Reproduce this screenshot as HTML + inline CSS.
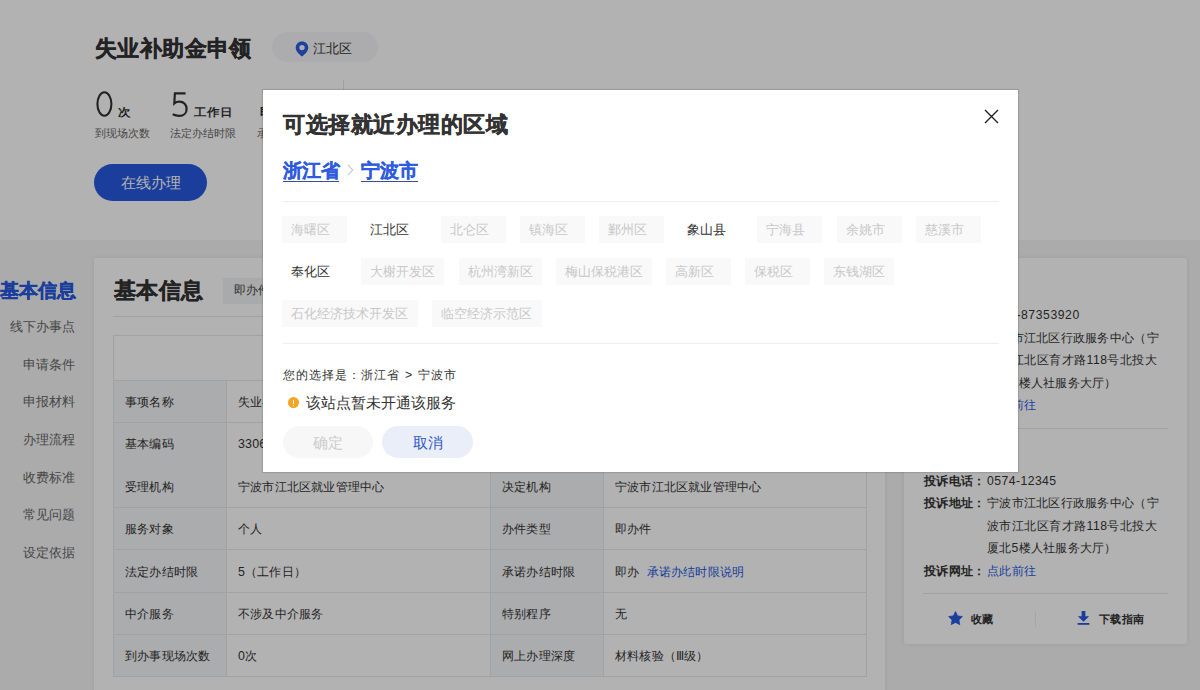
<!DOCTYPE html>
<html><head><meta charset="utf-8">
<style>
*{margin:0;padding:0;box-sizing:border-box}
html,body{width:1200px;height:690px;overflow:hidden}
body{font-family:"Liberation Sans",sans-serif;background:#f5f5f5;position:relative;color:#333}
.a{position:absolute;white-space:nowrap}
.top{position:absolute;left:0;top:0;width:1200px;height:240px;background:#fff}
.num{font-size:36px;line-height:38px;color:#333;transform:scaleX(.88);transform-origin:0 0}
.unit{font-size:12.5px;font-weight:bold;color:#333;line-height:14px;transform:scaleY(.88);transform-origin:0 100%}
.lab{font-size:11.25px;color:#666;line-height:14px}
.nav{right:1125px;font-size:13.1px;color:#666;line-height:16px;text-align:right}
.card{position:absolute;background:#fff;box-shadow:0 0 5px rgba(0,0,0,.08)}
.hl{position:absolute;background:#e8e8e8}
.cl{position:absolute;background:#f5f6f8}
.tt{position:absolute;letter-spacing:0.2px;font-size:12.4px;color:#333;line-height:16px;white-space:nowrap;margin-top:1px}
.overlay{position:absolute;left:0;top:0;width:1200px;height:690px;background:rgba(0,0,0,.3)}
.modal{position:absolute;left:263px;top:90px;width:755px;height:382px;background:#fff;box-shadow:0 0 1px 1px rgba(0,0,0,.12)}
.tag{position:absolute;height:27px;line-height:27px;font-size:13.1px;color:#c8c8c8;background:#f9f9f9;padding-left:9px;white-space:nowrap}
.tag.on{background:none;color:#333}
.rc{position:absolute;letter-spacing:0.27px;font-size:12.2px;line-height:16px;color:#333;white-space:nowrap}
.rb{font-weight:bold}
</style></head><body>
<div class="top"></div>
<div class="a" style="left:95px;top:35px;letter-spacing:0.4px;font-size:22px;font-weight:bold;color:#333;-webkit-text-stroke:0.4px #333;line-height:28px">失业补助金申领</div>
<div class="a" style="left:272px;top:32px;width:106px;height:30px;border-radius:15px;background:#f6f7f9"></div>
<svg class="a" style="left:295px;top:41px" width="14" height="16" viewBox="0 0 14 16"><path d="M7 0.6C3.5 0.6 0.7 3.3 0.7 6.7c0 3.4 3.6 6.7 6.3 8.8c2.7-2.1 6.3-5.4 6.3-8.8C13.3 3.3 10.5 0.6 7 0.6z M7 3.9a2.7 2.7 0 1 1 0 5.4a2.7 2.7 0 1 1 0-5.4z" fill="#2a5ce0" fill-rule="evenodd"/></svg>
<div class="a" style="left:313px;top:41px;font-size:13.1px;line-height:16px;color:#333">江北区</div>

<svg class="a" style="left:0;top:0" width="200" height="130"><ellipse cx="104.4" cy="104" rx="7" ry="11.7" fill="none" stroke="#333" stroke-width="2.1"/><path d="M185.6 93.3H174.9L174.3 103.4C175.6 102.3 177.4 101.7 179.4 101.7C183.9 101.7 186.6 105 186.6 108.9C186.6 113.2 183.6 115.9 179.3 115.9C176.8 115.9 174.5 115.3 172.7 114.3" fill="none" stroke="#333" stroke-width="2.2"/></svg>
<div class="a unit" style="left:118px;top:105px">次</div>
<div class="a lab" style="left:95px;top:126px">到现场次数</div>

<div class="a unit" style="left:194px;top:105px">工作日</div>
<div class="a lab" style="left:170px;top:126px">法定办结时限</div>
<div class="a unit" style="left:260px;top:105px">即办</div>
<div class="a lab" style="left:257px;top:126px">承诺办结时限</div>
<div class="a" style="left:343px;top:80px;width:1px;height:52px;background:#e5e5e5"></div>
<div class="a" style="left:94px;top:164px;width:113px;height:37px;border-radius:19px;background:#2759e0;color:#fff;font-size:15px;line-height:37px;text-align:center">在线办理</div>

<div class="a" style="left:0;top:280px;font-size:18.75px;font-weight:bold;color:#2759e0;-webkit-text-stroke:0.4px #2759e0;line-height:22px">基本信息</div>
<div class="a nav" style="top:319px">线下办事点</div>
<div class="a nav" style="top:356.7px">申请条件</div>
<div class="a nav" style="top:394.3px">申报材料</div>
<div class="a nav" style="top:432px">办理流程</div>
<div class="a nav" style="top:469.7px">收费标准</div>
<div class="a nav" style="top:507.3px">常见问题</div>
<div class="a nav" style="top:545px">设定依据</div>

<div class="card" style="left:94px;top:258px;width:791px;height:450px"></div>
<div class="a" style="left:114px;top:278px;letter-spacing:0.3px;font-size:22px;font-weight:bold;color:#333;-webkit-text-stroke:0.4px #333;line-height:26px">基本信息</div>
<div class="a" style="left:223px;top:278px;width:75px;height:25.5px;background:#f3f4f6;font-size:12.2px;line-height:25.5px;padding-left:10.5px;color:#444">即办件</div>
<div class="hl" style="left:113px;top:316px;width:753px;height:1px"></div>

<!-- table -->
<div class="cl" style="left:113px;top:380px;width:114px;height:296px"></div>
<div class="cl" style="left:490px;top:380px;width:114px;height:296px"></div>
<div class="hl" style="left:113px;top:335px;width:753px;height:1px"></div>
<div class="hl" style="left:113px;top:380px;width:753px;height:1px"></div>
<div class="hl" style="left:113px;top:422.3px;width:753px;height:1px"></div>
<div class="hl" style="left:113px;top:506.9px;width:753px;height:1px"></div>
<div class="hl" style="left:113px;top:549.2px;width:753px;height:1px"></div>
<div class="hl" style="left:113px;top:591.5px;width:753px;height:1px"></div>
<div class="hl" style="left:113px;top:633.8px;width:753px;height:1px"></div>
<div class="hl" style="left:113px;top:676px;width:753px;height:1px"></div>
<div class="hl" style="left:113px;top:335px;width:1px;height:342px"></div>
<div class="hl" style="left:866px;top:335px;width:1px;height:342px"></div>
<div class="hl" style="left:226px;top:380px;width:1px;height:297px"></div>
<div class="hl" style="left:490px;top:380px;width:1px;height:297px"></div>
<div class="hl" style="left:603px;top:380px;width:1px;height:297px"></div>

<div class="tt" style="left:125px;top:393px">事项名称</div>
<div class="tt" style="left:238px;top:393px">失业补助金申领</div>
<div class="tt" style="left:125px;top:435px">基本编码</div>
<div class="tt" style="left:238px;top:435px">33060200100</div>
<div class="tt" style="left:125px;top:478px">受理机构</div>
<div class="tt" style="left:238px;top:478px">宁波市江北区就业管理中心</div>
<div class="tt" style="left:502px;top:478px">决定机构</div>
<div class="tt" style="left:615px;top:478px">宁波市江北区就业管理中心</div>
<div class="tt" style="left:125px;top:520px">服务对象</div>
<div class="tt" style="left:238px;top:520px">个人</div>
<div class="tt" style="left:502px;top:520px">办件类型</div>
<div class="tt" style="left:615px;top:520px">即办件</div>
<div class="tt" style="left:125px;top:563px">法定办结时限</div>
<div class="tt" style="left:238px;top:563px">5（工作日）</div>
<div class="tt" style="left:502px;top:563px">承诺办结时限</div>
<div class="tt" style="left:615px;top:563px">即办 &nbsp;<span style="color:#2759e0">承诺办结时限说明</span></div>
<div class="tt" style="left:125px;top:605px">中介服务</div>
<div class="tt" style="left:238px;top:605px">不涉及中介服务</div>
<div class="tt" style="left:502px;top:605px">特别程序</div>
<div class="tt" style="left:615px;top:605px">无</div>
<div class="tt" style="left:125px;top:647px">到办事现场次数</div>
<div class="tt" style="left:238px;top:647px">0次</div>
<div class="tt" style="left:502px;top:647px">网上办理深度</div>
<div class="tt" style="left:615px;top:647px">材料核验（Ⅲ级）</div>

<!-- right card -->
<div class="card" style="left:904px;top:258px;width:283px;height:386px;border-radius:3px"></div>
<div class="rc" style="left:987px;top:307px;letter-spacing:0.57px">0574-87353920</div>
<div class="rc" style="left:987px;top:330px">宁波市江北区行政服务中心（宁</div>
<div class="rc" style="left:987px;top:352px;letter-spacing:0.45px">波市江北区育才路118号北投大</div>
<div class="rc" style="left:987px;top:375px">厦北5楼人社服务大厅）</div>
<div class="rc" style="left:987px;top:397px;color:#2759e0">点此前往</div>
<div class="hl" style="left:923px;top:428px;width:245px;height:1px"></div>
<div class="rc rb" style="left:924px;top:473px">投诉电话：</div>
<div class="rc" style="left:987px;top:473px;letter-spacing:0.45px">0574-12345</div>
<div class="rc rb" style="left:924px;top:495px">投诉地址：</div>
<div class="rc" style="left:987px;top:495px">宁波市江北区行政服务中心（宁</div>
<div class="rc" style="left:987px;top:518px;letter-spacing:0.45px">波市江北区育才路118号北投大</div>
<div class="rc" style="left:987px;top:540px">厦北5楼人社服务大厅）</div>
<div class="rc rb" style="left:924px;top:563px">投诉网址：</div>
<div class="rc" style="left:987px;top:563px;color:#2759e0">点此前往</div>
<div class="hl" style="left:923px;top:593px;width:245px;height:1px"></div>
<svg class="a" style="left:948px;top:611px" width="15" height="15" viewBox="0 0 15 15"><path d="M7.50 0.60L9.62 4.89L14.35 5.58L10.92 8.91L11.73 13.62L7.50 11.40L3.27 13.62L4.08 8.91L0.65 5.58L5.38 4.89Z" fill="#2759e0" stroke="#2759e0" stroke-width="0.8" stroke-linejoin="round"/></svg>
<div class="rc rb" style="left:971px;top:610.5px;font-size:11.3px;letter-spacing:0px">收藏</div>
<div class="hl" style="left:1035px;top:611px;width:1px;height:16px;background:#eee"></div>
<svg class="a" style="left:1077px;top:611px" width="13" height="14" viewBox="0 0 13 14"><path d="M4.6 0h3.8v5.2h3.8L6.5 10.8 0.8 5.2h3.8z" fill="#2759e0"/><rect x="0.6" y="12" width="11.8" height="1.8" fill="#2759e0"/></svg>
<div class="rc rb" style="left:1099px;top:610.5px;font-size:11.3px;letter-spacing:0.3px">下载指南</div>

<div class="overlay"></div>
<div class="modal">
  <div class="a" style="left:20px;top:22px;letter-spacing:0.55px;font-size:22px;font-weight:bold;color:#333;-webkit-text-stroke:0.4px #333;line-height:26px">可选择就近办理的区域</div>
  <svg class="a" style="left:721px;top:19px" width="15" height="15" viewBox="0 0 15 15"><path d="M1 1L14 14M14 1L1 14" stroke="#222" stroke-width="1.4"/></svg>
  <div class="a" style="left:20px;top:70px;font-size:18.5px;font-weight:bold;color:#2f5be0;-webkit-text-stroke:0.3px #2f5be0;line-height:22px">浙江省</div>
  <div class="a" style="left:20px;top:91px;width:56px;height:1px;background:#3a4f9a"></div>
  <svg class="a" style="left:84px;top:74px" width="7" height="12" viewBox="0 0 7 12"><path d="M0.8 0.8l5 5.2l-5 5.2" stroke="#c8c8c8" stroke-width="1.1" fill="none"/></svg>
  <div class="a" style="left:98px;top:70px;font-size:18.5px;font-weight:bold;color:#2f5be0;-webkit-text-stroke:0.3px #2f5be0;line-height:22px">宁波市</div>
  <div class="a" style="left:98px;top:91px;width:57px;height:1px;background:#3a4f9a"></div>
  <div class="a" style="left:20px;top:111px;width:716px;height:1px;background:#eee"></div>

  <div class="tag" style="left:19px;top:126px;width:65px">海曙区</div>
  <div class="tag on" style="left:98px;top:126px;width:65px">江北区</div>
  <div class="tag" style="left:178px;top:126px;width:65px">北仑区</div>
  <div class="tag" style="left:257px;top:126px;width:65px">镇海区</div>
  <div class="tag" style="left:336px;top:126px;width:65px">鄞州区</div>
  <div class="tag on" style="left:415px;top:126px;width:65px">象山县</div>
  <div class="tag" style="left:494px;top:126px;width:65px">宁海县</div>
  <div class="tag" style="left:574px;top:126px;width:65px">余姚市</div>
  <div class="tag" style="left:653px;top:126px;width:65px">慈溪市</div>

  <div class="tag on" style="left:19px;top:168px;width:65px">奉化区</div>
  <div class="tag" style="left:98px;top:168px;width:83px">大榭开发区</div>
  <div class="tag" style="left:196px;top:168px;width:83px">杭州湾新区</div>
  <div class="tag" style="left:293px;top:168px;width:96px">梅山保税港区</div>
  <div class="tag" style="left:403px;top:168px;width:65px">高新区</div>
  <div class="tag" style="left:482px;top:168px;width:65px">保税区</div>
  <div class="tag" style="left:561px;top:168px;width:70px">东钱湖区</div>

  <div class="tag" style="left:19px;top:210px;width:136px">石化经济技术开发区</div>
  <div class="tag" style="left:169px;top:210px;width:110px">临空经济示范区</div>

  <div class="a" style="left:20px;top:253px;width:716px;height:1px;background:#eee"></div>
  <div class="a" style="left:20px;top:277px;font-size:12.4px;letter-spacing:1px;line-height:16px;color:#333">您的选择是：浙江省<span style="margin:0 5px">&gt;</span>宁波市</div>
  <div class="a" style="left:25px;top:307px;width:11px;height:11px;border-radius:50%;background:#f5a623"><div style="position:absolute;left:5px;top:2.5px;width:1px;height:4px;background:#fff"></div><div style="position:absolute;left:5px;top:7.5px;width:1px;height:1px;background:#fff"></div></div>
  <div class="a" style="left:43px;top:304px;font-size:15px;line-height:18px;color:#333">该站点暂未开通该服务</div>
  <div class="a" style="left:20px;top:336px;width:90px;height:32px;border-radius:16px;background:#f7f7f7;color:#ccc;font-size:15px;line-height:33px;text-align:center">确定</div>
  <div class="a" style="left:119px;top:336px;width:91px;height:32px;border-radius:16px;background:#eaeef9;color:#2f56c8;font-size:15px;line-height:33.5px;text-align:center">取消</div>
</div>
</body></html>
